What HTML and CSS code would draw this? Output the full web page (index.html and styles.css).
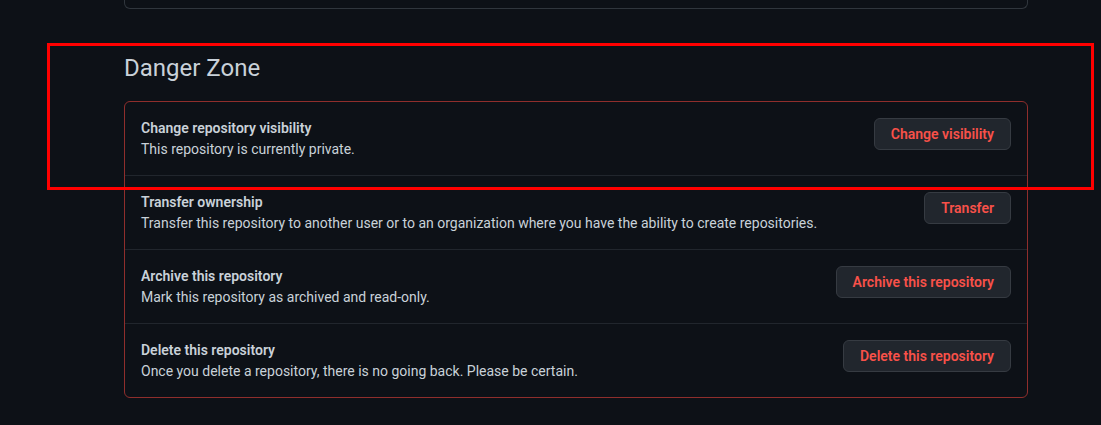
FILE: index.html
```html
<!DOCTYPE html>
<html lang="en">
<head>
<meta charset="utf-8">
<title>Danger Zone</title>
<link rel="stylesheet" href="styles.css">
</head>
<body>
<div class="page">
  <div class="prev-box"></div>
  <div class="subhead">
    <h2 class="subhead-heading">Danger Zone</h2>
  </div>
  <div class="danger-box">
    <div class="row">
      <div class="row-text">
        <div class="row-title">Change repository visibility</div>
        <div class="row-desc">This repository is currently private.</div>
      </div>
      <button class="btn-danger">Change visibility</button>
    </div>
    <div class="row">
      <div class="row-text">
        <div class="row-title">Transfer ownership</div>
        <div class="row-desc">Transfer this repository to another user or to an organization where you have the ability to create repositories.</div>
      </div>
      <button class="btn-danger">Transfer</button>
    </div>
    <div class="row">
      <div class="row-text">
        <div class="row-title">Archive this repository</div>
        <div class="row-desc">Mark this repository as archived and read-only.</div>
      </div>
      <button class="btn-danger">Archive this repository</button>
    </div>
    <div class="row">
      <div class="row-text">
        <div class="row-title">Delete this repository</div>
        <div class="row-desc">Once you delete a repository, there is no going back. Please be certain.</div>
      </div>
      <button class="btn-danger">Delete this repository</button>
    </div>
  </div>
</div>
<div class="highlight"></div>
</body>
</html>
```
FILE: styles.css
```css
html, body {
  margin: 0;
  padding: 0;
  background: #0d1117;
  height: 100%;
  overflow: hidden;
}
body {
  font-family: Roboto, "Noto Sans", "Liberation Sans", sans-serif;
  color: #c9d1d9;
  font-size: 14px;
  line-height: 1.5;
  position: relative;
}
.page {
  margin-left: 124px;
  width: 904px;
}
.prev-box {
  height: 20px;
  margin-top: -12px;
  border: 1px solid #30363d;
  border-top: none;
  border-radius: 0 0 6px 6px;
}
.subhead {
  margin-top: 41px;
  padding-bottom: 8px;
  margin-bottom: 7px;
}
.subhead-heading {
  margin: 0;
  font-size: 24px;
  font-weight: 400;
  line-height: 36px;
  color: #c9d1d9;
}
.danger-box {
  border: 1px solid #8f2e2c;
  border-radius: 6px;
}
.row {
  display: flex;
  justify-content: space-between;
  align-items: flex-start;
  padding: 16px;
  border-top: 1px solid #21262d;
}
.row:first-child {
  border-top: none;
}
.row-title {
  font-weight: 600;
  line-height: 21px;
}
.row-desc {
  line-height: 20px;
}
.btn-danger {
  flex: none;
  height: 32px;
  padding: 0 16px;
  font-family: inherit;
  font-size: 14px;
  font-weight: 600;
  color: #f85149;
  background: #21262d;
  border: 1px solid #363b42;
  border-radius: 6px;
}
.highlight {
  position: absolute;
  left: 47px;
  top: 43px;
  width: 1041px;
  height: 141px;
  border: 3px solid #ff0000;
}
```
